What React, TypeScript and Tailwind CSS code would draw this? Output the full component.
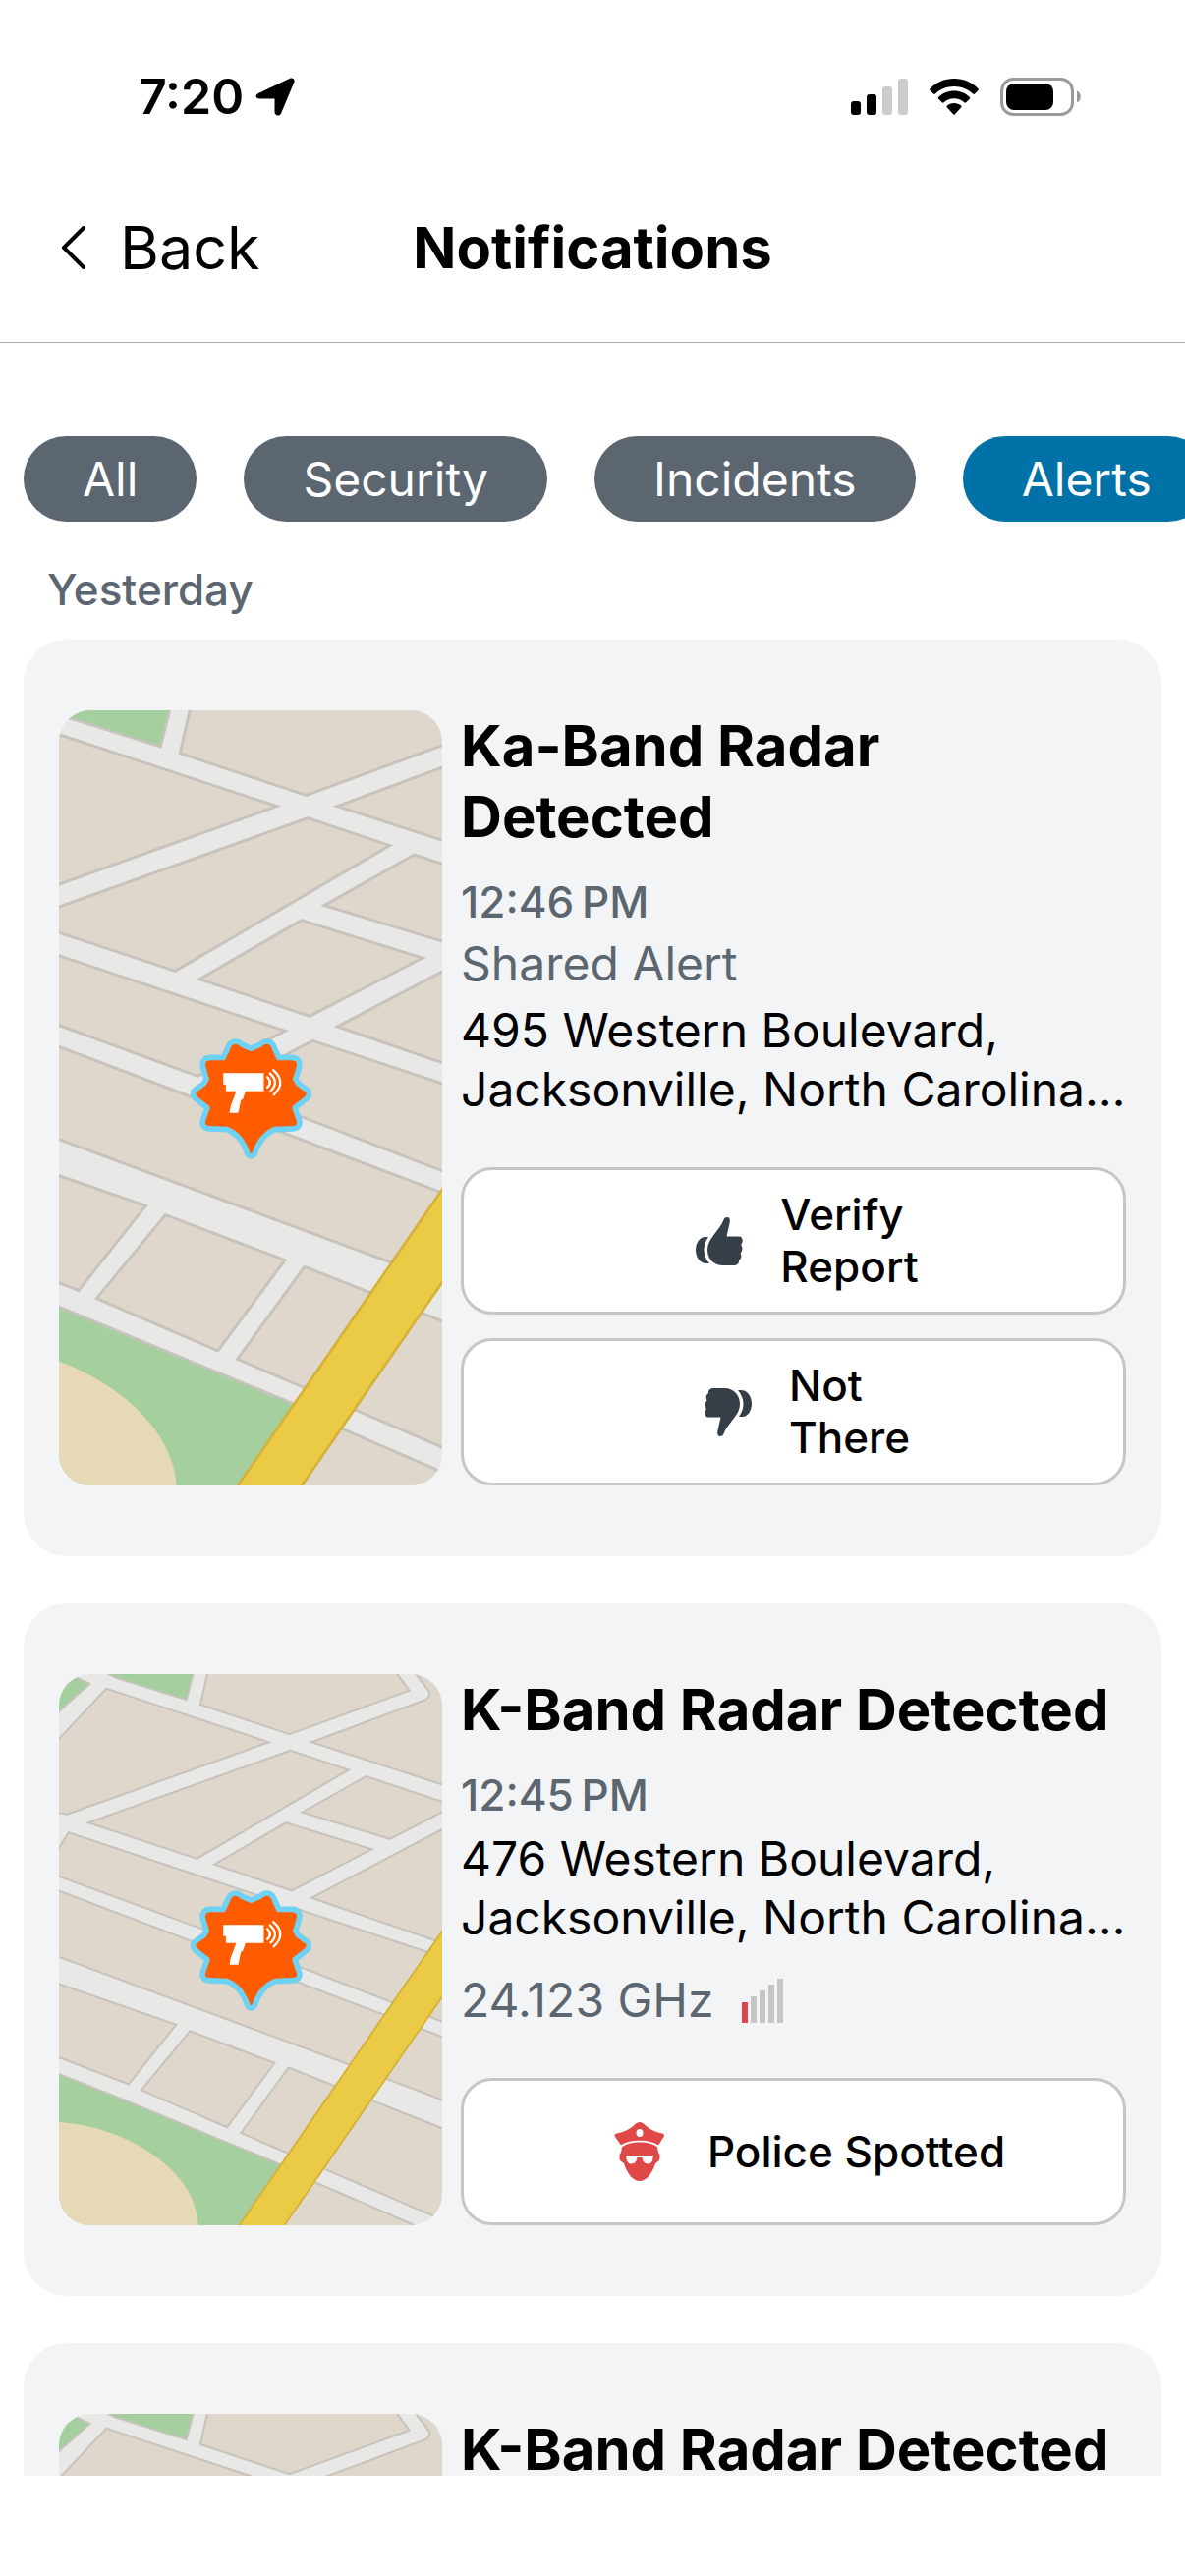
import type { ReactNode } from "react"

type Action = {
  label: string
  icon: ReactNode
  stacked?: boolean
}

type Alert = {
  id: number
  title: string
  time?: string
  source?: string
  address?: string
  frequency?: string
  mapView: string
  actions: Action[]
}

const filters = ["All", "Security", "Incidents", "Alerts"]

const NEAR_VIEW = "60 69 1170 2367"
const FAR_VIEW = "-181 68 1655 2381"

// city blocks; the streets are the gaps between them
const blocks = [
  "M466 40 430 200 815 328 1332 139 1260 40Z",
  "M24 131 725 362 -146 674 -220 660 -220 388Z",
  "M910 362 1400 180Q1430 165 1415 140L1340 40H1500V553Z",
  "M820 398 1070 482 415 865 -54 710Z",
  "M1145 510 1500 628V650L1250 780 870 665Z",
  "M800 710 1170 825 825 1003 490 890Z",
  "M1500 725 910 1035 1500 1238Z",
  "M-139 752 750 1048 484 1186 -220 928V880Z",
  "M835 1078 1500 1298V1579L563 1219Z",
  "M-220 990 460 1248 760 1365 1500 1644V1917L1065 1752 -220 1275Z",
  "M-220 1393 325 1582 120 1840 -220 1708Z",
  "M385 1610 750 1748 545 2025 175 1865Z",
  "M810 1768 1500 2040V2436L605 2050Z",
  "M830 2222 1380 2460H780Z",
]

const parks = [
  "M-20 40H406L370 180 60 83Z",
  "M-220 44 -110 80 -47 110 -220 265Z",
  "M-220 1780 60 1890 790 2192 620 2460H-220Z",
]

function StreetMap({ view }: { view: string }) {
  return (
    <svg viewBox={view} preserveAspectRatio="xMidYMid slice" className="absolute inset-0 size-full bg-[#e8e8e6]">
      {parks.map((d) => (
        <path key={d} d={d} fill="#a6cf9f" stroke="#c8c3bd" strokeWidth="8" />
      ))}
      <path d="M-220 2002C60 2002 420 2190 420 2460H-220Z" fill="#e6dab6" />
      {blocks.map((d) => (
        <path key={d} d={d} fill="#dfd7cb" stroke="#c8c3bd" strokeWidth="9" />
      ))}
      <path d="M1510 1126V1411L785 2460H590Z" fill="#ebcb45" stroke="#d6b13a" strokeWidth="8" />
    </svg>
  )
}

const PIN_SHAPE =
  "M595 1092Q602 1090 612 1100L645 1114 678 1100Q688 1090 697 1092Q703 1094 706 1106L722 1140 770 1141Q784 1141 780 1156L768 1196 780 1216 810 1238 808 1244 768 1275 767 1286 781 1325Q783 1334 772 1334L716 1336Q664 1356 645 1418Q626 1356 574 1336L518 1334Q507 1334 509 1325L523 1286 522 1275 482 1244 480 1238 510 1216 522 1196 510 1156Q506 1141 520 1141L568 1140 584 1106Q588 1093 595 1092Z"

function RadarPin() {
  return (
    <svg viewBox="460 1067 370 373" className="relative h-[124px] w-[123px]">
      <path d={PIN_SHAPE} fill="#6fd2f5" stroke="#6fd2f5" strokeWidth="42" strokeLinejoin="round" />
      <path d={PIN_SHAPE} fill="#ff5c00" stroke="#ff5c00" strokeWidth="8" strokeLinejoin="round" />
      <path d="M560 1176H684V1232H628L620 1256 614 1259 606 1298H579L583 1276 598 1236V1232H568V1211H560Z" fill="#fff" />
      <path
        d="M695 1188Q711 1204 695 1220M703 1177Q733 1204 705 1231M713 1167Q755 1204 715 1242"
        fill="none"
        stroke="#fff"
        strokeWidth="7"
        strokeLinecap="round"
      />
    </svg>
  )
}

function Thumb({ down = false }: { down?: boolean }) {
  return (
    <svg viewBox="0 0 48 49" fill="#363f47" className={down ? "h-[49px] w-12 rotate-180" : "h-[49px] w-12"}>
      <path d="M32 0c3 0 3.200 3 2.500 6L31.500 19.500H44c4 0 5 5.500 2 8.500 2 2 2 6-.5 8.500 1.500 2.500 1 5.500-1.500 7.500.5 3-2 5-5 5H28C18 49 12 42 12 33c0-5 2-9 5-13 5-7 9-11 11.500-17.500C29.300.700 30.500 0 32 0Z" />
      <path d="M13 20C10 24 8.500 29 8.500 33c0 5 2 10 5.500 14h-3C4 47 0 40 0 33.500 0 26 4 20 10 20Z" />
    </svg>
  )
}

function Officer() {
  return (
    <svg viewBox="-5 0 62 60" className="h-[60px] w-[62px]">
      <g fill="#e04848">
        <path d="M26 0c2 0 4 1.500 6 3.500C37 8 43 10.500 49 11.500c2 .5 2.500 2 1.500 3.500L45 23.500C38 17 14 17 7 23.500L1 15C0 13.500.5 12 2.500 11.500 9 10.500 15 8 20 3.500 22 1.500 24 0 26 0Z" />
        <path d="M26 20.500c8 0 14 1.500 18 5L45 31c2 1.500 2 6 .5 8.500L42 42C39 52 33 60 26 60S13 52 10 42l-3.500-2.500C5 37 5 32.500 7 31l1-5.500c4-3.500 10-5 18-5Z" />
      </g>
      <g fill="#fff">
        <ellipse cx="26" cy="11" rx="3.500" ry="4" />
        <path d="M12 34h28l-.5 2c0 4-2 6.500-5 6.500-4 0-5.500-3-6-6.500h-5c-.5 3.500-2 6.500-6 6.500-3 0-5-2.500-5-6.500Z" />
      </g>
    </svg>
  )
}

function StatusBar() {
  return (
    <div className="mt-[68px] flex h-[60px] shrink-0 items-center justify-between pr-[106px] pl-[141px]">
      <div className="flex items-center gap-3">
        <span className="text-[50px] leading-[60px] font-semibold">7:20</span>
        <svg viewBox="0 0 40 39" className="h-[39px] w-10">
          <path d="M3 16 35 .8c3-1.300 5.500.8 4.300 4L26 36.500c-1.300 3.200-6.500 2.500-6.500-1.500V21.500H4.500C0 21.500-.8 17.800 3 16Z" />
        </svg>
      </div>
      <div className="flex items-center gap-[22px]">
        <svg viewBox="0 0 58 37" className="h-[37px] w-[58px]">
          <rect y="23" width="10" height="14" rx="3" />
          <rect x="16" y="16" width="10" height="21" rx="3" />
          <rect x="32" y="8" width="10" height="29" rx="3" fill="#ccc" />
          <rect x="48" width="10" height="37" rx="3" fill="#ccc" />
        </svg>
        <svg viewBox="0 0 50 37" className="h-[37px] w-[50px]">
          <path d="M25 0C35 0 43.500 4 49.500 10.200c.6.600.6 1.300 0 1.900L46 15.600c-.6.600-1.300.6-1.900 0C39 10.700 32.500 8 25 8S11 10.700 5.900 15.600c-.6.600-1.300.6-1.900 0L.5 12.100c-.6-.6-.6-1.300 0-1.900C6.500 4 15 0 25 0Z" />
          <path d="M25 12.500c6.300 0 11.800 2.400 15.800 6.300.6.600.6 1.300 0 1.900l-3.600 3.500c-.6.600-1.300.6-1.900 0-2.700-2.400-6.200-3.900-10.300-3.900s-7.600 1.500-10.300 3.900c-.6.600-1.300.6-1.900 0l-3.600-3.500c-.6-.6-.6-1.300 0-1.900 4-3.900 9.500-6.300 15.800-6.300Z" />
          <path d="M25 25c2.800 0 5.300 1 7.100 2.600.6.600.6 1.200 0 1.800l-6.200 6.900c-.6.700-1.200.7-1.800 0l-6.200-6.900c-.6-.6-.6-1.200 0-1.800C19.700 26 22.200 25 25 25Z" />
        </svg>
        <svg viewBox="0 0 82 39" className="h-[39px] w-[82px]">
          <rect x="1.500" y="1.500" width="72" height="36" rx="12" fill="none" stroke="#9a9a9a" strokeWidth="3" />
          <rect x="6" y="6" width="48" height="27" rx="8" />
          <path d="M78 13.500c5 1.500 5 10.500 0 12Z" fill="#9a9a9a" />
        </svg>
      </div>
    </div>
  )
}

function SignalBars() {
  return (
    <svg viewBox="0 0 42 45" className="h-[45px] w-[42px]">
      <rect y="24" width="6" height="21" fill="#e0444a" />
      <g fill="#c5c5c7">
        <rect x="9" y="18" width="6" height="27" />
        <rect x="18" y="12" width="6" height="33" />
        <rect x="27" y="6" width="6" height="39" />
        <rect x="36" width="6" height="45" />
      </g>
    </svg>
  )
}

const alerts: Alert[] = [
  {
    id: 1,
    title: "Ka-Band Radar Detected",
    time: "12:46\u202fPM",
    source: "Shared Alert",
    address: "495 Western Boulevard, Jacksonville, North Carolina…",
    mapView: NEAR_VIEW,
    actions: [
      { label: "Verify Report", icon: <Thumb />, stacked: true },
      { label: "Not There", icon: <Thumb down />, stacked: true },
    ],
  },
  {
    id: 2,
    title: "K-Band Radar Detected",
    time: "12:45\u202fPM",
    address: "476 Western Boulevard, Jacksonville, North Carolina…",
    frequency: "24.123 GHz",
    mapView: FAR_VIEW,
    actions: [{ label: "Police Spotted", icon: <Officer /> }],
  },
  {
    id: 3,
    title: "K-Band Radar Detected",
    mapView: FAR_VIEW,
    actions: [],
  },
]

function AlertCard({ alert }: { alert: Alert }) {
  return (
    <article className="flex shrink-0 gap-[19px] rounded-[44px] bg-gray-100 px-9 py-[72px]">
      <div className="relative flex min-h-[561px] w-[390px] shrink-0 items-center justify-center overflow-hidden rounded-[32px]">
        <StreetMap view={alert.mapView} />
        <RadarPin />
      </div>
      <div className="flex min-w-0 flex-1 flex-col">
        <h2 className="text-[58px] leading-[72px] font-bold">{alert.title}</h2>
        {alert.time && <p className="mt-6 text-[44px] leading-[54px] font-medium text-[#5c6670]">{alert.time}</p>}
        {alert.source && <p className="mt-1.5 text-[48px] leading-[60px] text-[#5c6670]">{alert.source}</p>}
        {alert.address && <p className="mt-2 text-[48px] leading-[60px]">{alert.address}</p>}
        {alert.frequency && (
          <div className="mt-6 flex items-center gap-7 text-[48px] leading-[60px] text-[#5c6670]">
            {alert.frequency}
            <SignalBars />
          </div>
        )}
        {alert.actions.length > 0 && (
          <div className="mt-[49px] flex flex-col gap-6">
            {alert.actions.map((action) => (
              <button
                key={action.label}
                type="button"
                className="flex h-[150px] items-center justify-center gap-[38px] rounded-[32px] border-3 border-[#c6c6c8] bg-white pl-7 text-left text-[44px] leading-[53px] font-medium"
              >
                {action.icon}
                <span className={action.stacked ? "w-min" : ""}>{action.label}</span>
              </button>
            ))}
          </div>
        )}
      </div>
    </article>
  )
}

export default function App() {
  return (
    <div className="flex h-screen flex-col overflow-hidden bg-white font-[Inter,sans-serif] text-black">
      <StatusBar />
      <header className="grid h-[221px] shrink-0 grid-cols-[1fr_auto_1fr] items-center border-b border-[#a8a8a8] pt-7">
        <button type="button" className="flex items-center gap-[34px] pl-[62px] text-[61px] leading-[72px]">
          <svg viewBox="0 0 26 44" className="h-11 w-[26px]" fill="none" stroke="currentColor" strokeWidth="4" strokeLinecap="round" strokeLinejoin="round">
            <path d="M23 2 3 22 23 42" />
          </svg>
          Back
        </button>
        <h1 className="text-[58px] leading-[72px] font-bold">Notifications</h1>
      </header>

      <main className="flex flex-1 flex-col overflow-hidden pt-[95px]">
        <nav className="flex shrink-0 gap-12 overflow-hidden pl-6">
          {filters.map((name) => (
            <button
              key={name}
              type="button"
              className={
                name === "Alerts"
                  ? "h-[87px] shrink-0 rounded-full bg-[#0072a8] px-[60px] text-[48px] leading-[60px] text-white"
                  : "h-[87px] shrink-0 rounded-full bg-[#5c6670] px-[60px] text-[48px] leading-[60px] text-white"
              }
            >
              {name}
            </button>
          ))}
        </nav>
        <p className="mt-[42px] shrink-0 px-12 text-[44px] leading-[54px] font-medium text-[#5c6670]">Yesterday</p>
        <section className="mt-6 flex min-h-0 flex-1 flex-col gap-12 overflow-hidden px-6">
          {alerts.map((alert) => (
            <AlertCard key={alert.id} alert={alert} />
          ))}
        </section>
      </main>
      <footer className="h-[102px] shrink-0" />
    </div>
  )
}
